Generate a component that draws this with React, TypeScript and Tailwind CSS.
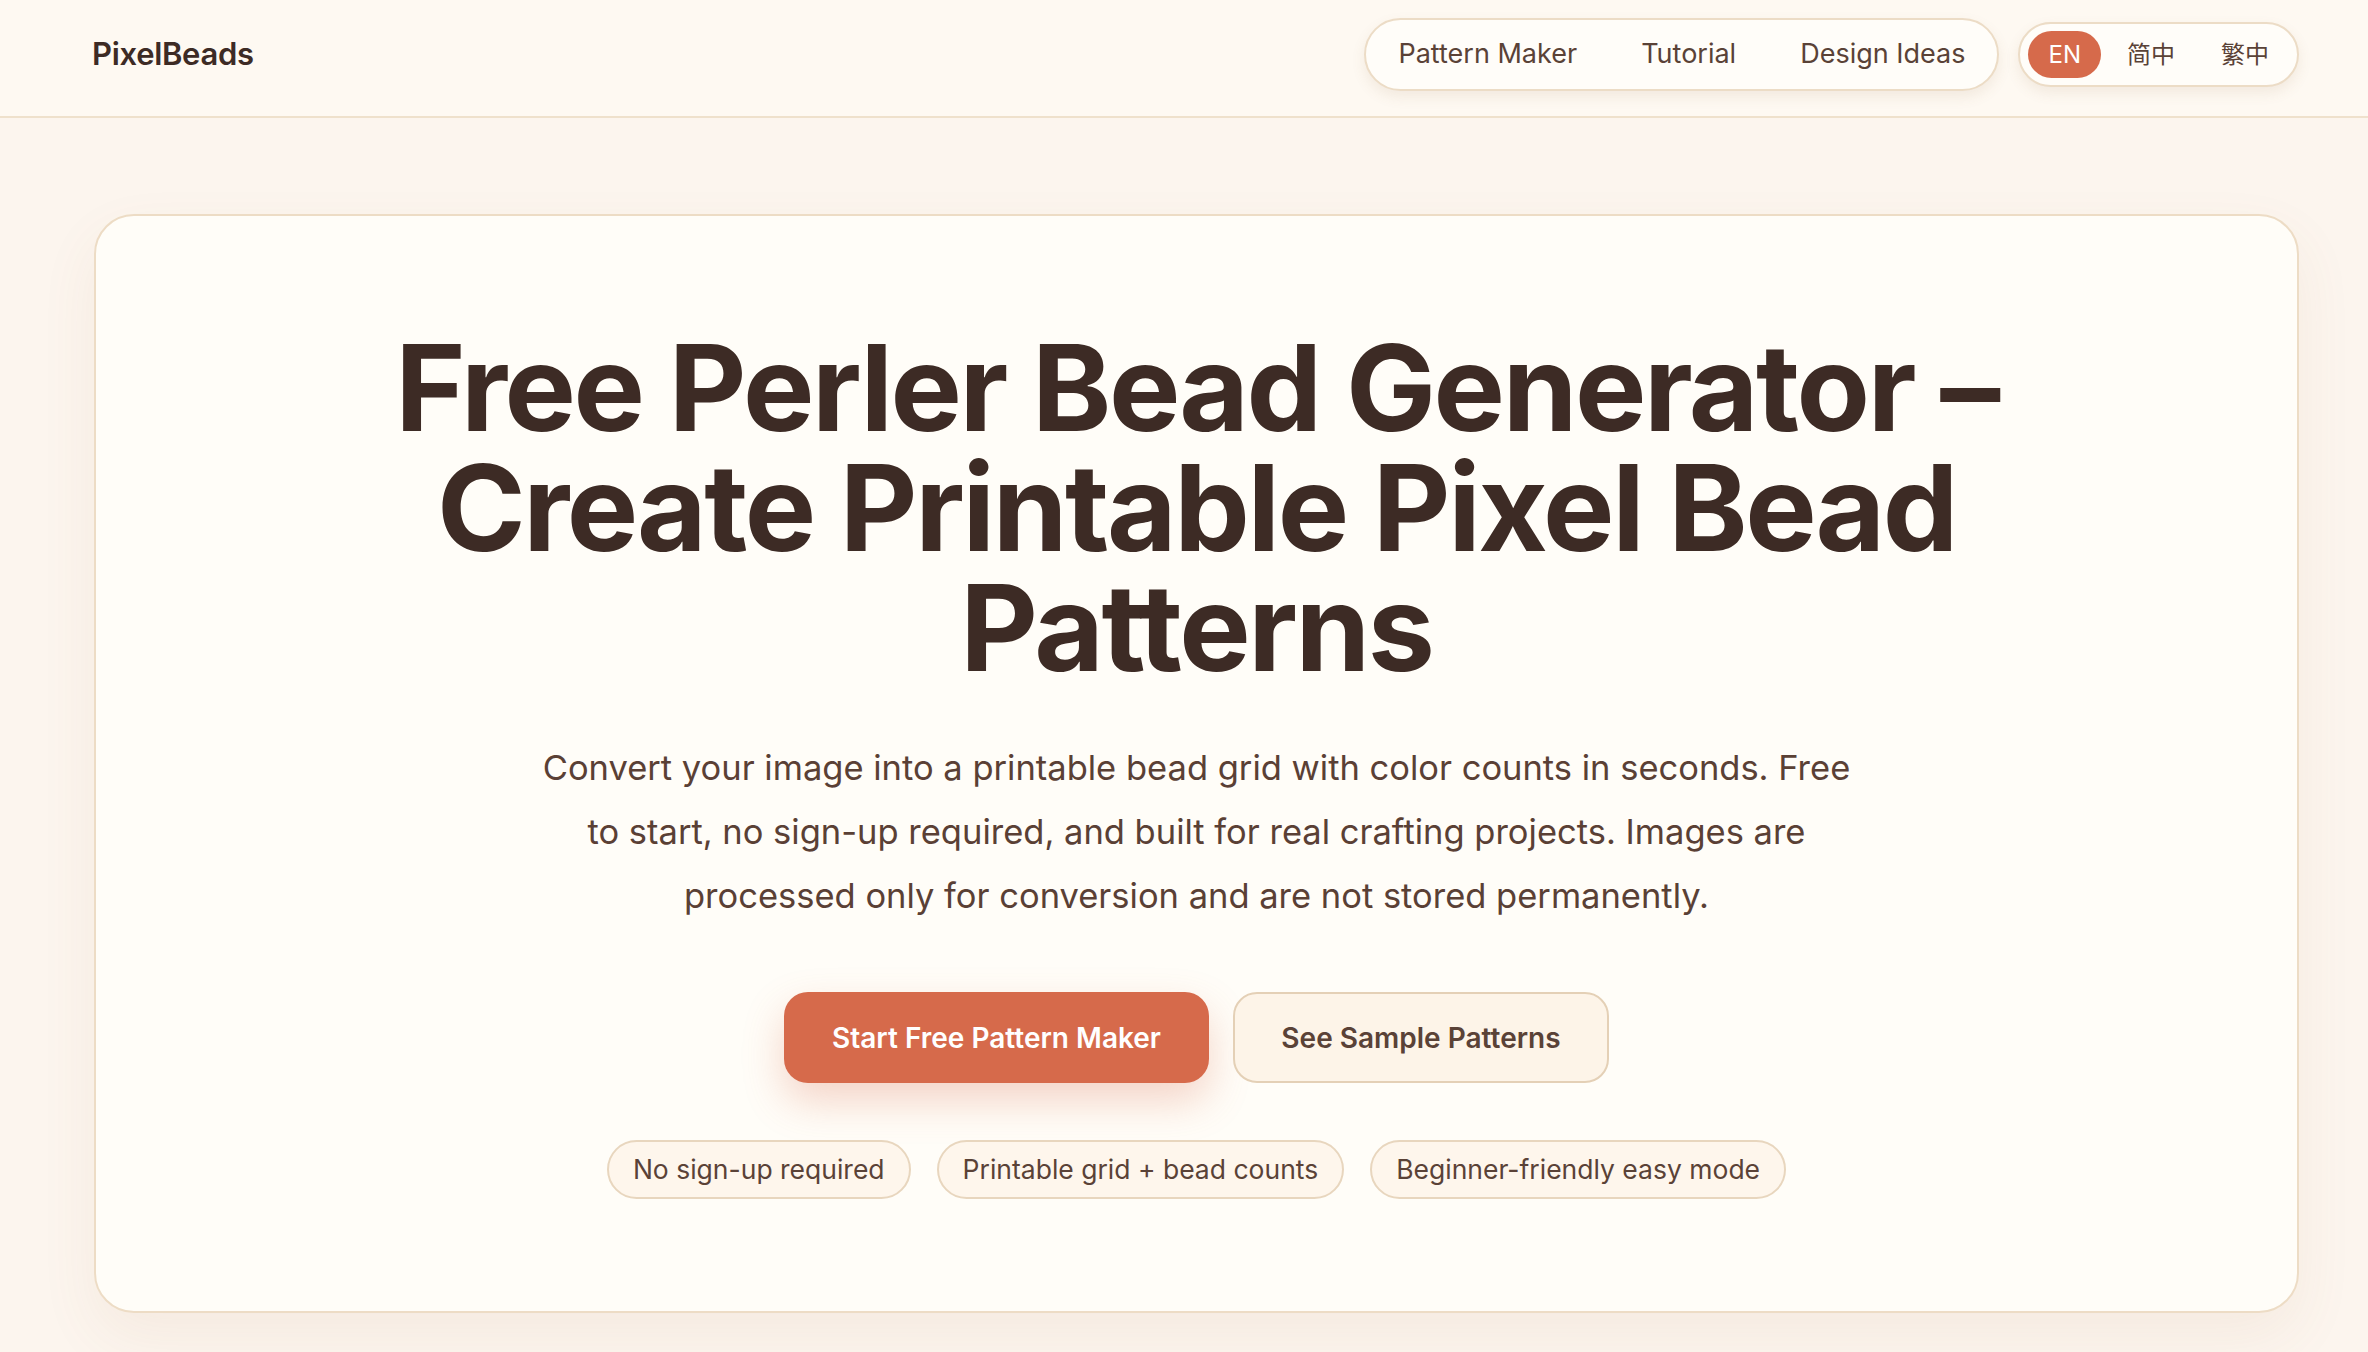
import React from 'react';

/* ---------- Daten ---------- */

const NAV_LINKS = ['Pattern Maker', 'Tutorial', 'Design Ideas'];
const LANGS = ['EN', '简中', '繁中'];
const PERKS = ['No sign-up required', 'Printable grid + bead counts', 'Beginner-friendly easy mode'];

/* ---------- Header ---------- */

function Header() {
  return (
    <header className="border-b-2 border-[#efe1cc] bg-[#fef9f2]">
      <div className="flex items-center justify-between pl-[92px] pr-[69px] pt-[18px] pb-[25px]">
        <a className="text-[31px] font-semibold tracking-[-0.01em] text-[#3d2b25]">PixelBeads</a>

        <div className="flex items-center gap-[19px]">
          <nav className="flex h-[73px] items-center rounded-full border-2 border-[#ecdcc6] bg-[#fffdf9] shadow-[0_6px_14px_rgba(140,100,60,0.10)]">
            {NAV_LINKS.map((l) => (
              <a key={l} className="px-8 text-[27px] text-[#5a4237]">
                {l}
              </a>
            ))}
          </nav>

          <div className="flex h-[65px] items-center gap-[6px] rounded-full border-2 border-[#ecdcc6] bg-[#fffdf9] px-2 shadow-[0_6px_14px_rgba(140,100,60,0.10)]">
            {LANGS.map((l, i) => (
              <button
                key={l}
                className={
                  'flex h-[47px] items-center rounded-full px-5 text-[24px] ' +
                  (i === 0 ? 'bg-[#d66a4b] text-white' : 'text-[#5a4237]')
                }
                style={{ fontFamily: i === 0 ? undefined : "Inter, 'Noto Sans CJK SC', sans-serif" }}
              >
                {l}
              </button>
            ))}
          </div>
        </div>
      </div>
    </header>
  );
}

/* ---------- Hero ---------- */

function Hero() {
  return (
    <section className="rounded-[40px] border-2 border-[#eddcc5] bg-[#fffdf8] px-28 py-28 shadow-[0_24px_60px_rgba(150,100,60,0.07)]">
      <h1 className="mx-auto max-w-[1720px] text-center text-[120px] font-bold leading-[120px] tracking-[-0.02em] text-[#3d2b25]">
        Free Perler Bead Generator – Create Printable Pixel Bead Patterns
      </h1>

      <p className="mx-auto mt-12 max-w-[1320px] text-center text-[34.5px] leading-[64px] text-[#5a4035]">
        Convert your image into a printable bead grid with color counts in seconds. Free to start, no sign-up required,
        and built for real crafting projects. Images are processed only for conversion and are not stored permanently.
      </p>

      <div className="mt-16 flex justify-center gap-6">
        <button className="h-[91px] w-[425px] rounded-[24px] bg-[#d66a4b] text-[28px] font-semibold text-white shadow-[0_18px_40px_rgba(214,106,75,0.28)]">
          Start Free Pattern Maker
        </button>
        <button className="h-[91px] w-[376px] rounded-[24px] border-2 border-[#e4d0b6] bg-[#fdf4e8] text-[28px] font-semibold text-[#5a4237]">
          See Sample Patterns
        </button>
      </div>

      <div className="mt-[57px] flex justify-center gap-[26px]">
        {PERKS.map((p) => (
          <span
            key={p}
            className="flex h-[59px] items-center rounded-full border-2 border-[#e8d6be] bg-[#fef6ec] px-6 text-[26.5px] text-[#5a4237]"
          >
            {p}
          </span>
        ))}
      </div>
    </section>
  );
}

/* ---------- App ---------- */

export default function App() {
  return (
    <div className="min-h-screen bg-[#fcf5ee] font-['Inter',sans-serif]">
      <Header />
      <main className="pl-[94px] pr-[69px] pt-24 pb-20">
        <Hero />
      </main>
    </div>
  );
}
